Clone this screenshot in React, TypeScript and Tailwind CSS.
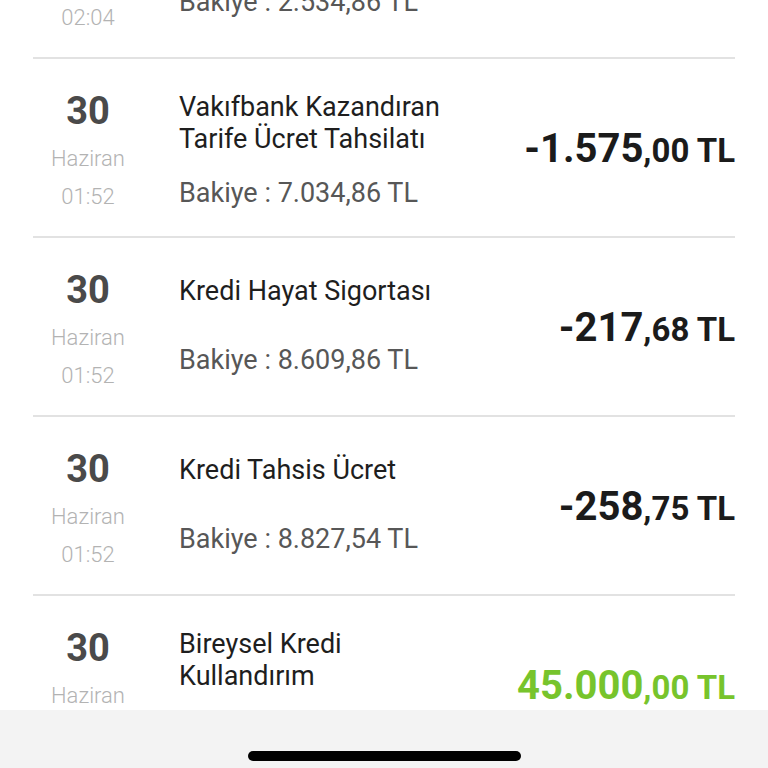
import React from "react";

type Tx = {
    day: string;
    month: string;
    time: string;
    title: string[];
    balance?: string;
    main?: string;
    cents?: string;
    positive?: boolean;
};

const rows: Tx[] = [
    { day: "30", month: "Haziran", time: "02:04", title: ["Kredi Faiz Tahsilatı"], balance: "2.534,86 TL", main: "-500", cents: ",00 TL" },
    {
        day: "30",
        month: "Haziran",
        time: "01:52",
        title: ["Vakıfbank Kazandıran", "Tarife Ücret Tahsilatı"],
        balance: "7.034,86 TL",
        main: "-1.575",
        cents: ",00 TL",
    },
    { day: "30", month: "Haziran", time: "01:52", title: ["Kredi Hayat Sigortası"], balance: "8.609,86 TL", main: "-217", cents: ",68 TL" },
    { day: "30", month: "Haziran", time: "01:52", title: ["Kredi Tahsis Ücret"], balance: "8.827,54 TL", main: "-258", cents: ",75 TL" },
    {
        day: "30",
        month: "Haziran",
        time: "01:52",
        title: ["Bireysel Kredi", "Kullandırım"],
        balance: "52.827,54 TL",
        main: "45.000",
        cents: ",00 TL",
        positive: true,
    },
];

function Row({ tx }: { tx: Tx }) {
    const twoLine = tx.title.length > 1;
    return (
        <div className="h-[179px] shrink-0 flex items-center border-b-2 border-[#e2e2e2]">
            <div className="self-start pt-[32px] w-[110px] flex flex-col items-center">
                <div className="text-[38px] leading-[40px] font-bold text-[#4a4a4a]">{tx.day}</div>
                <div className="mt-[13px] text-[22px] leading-[30px] font-light text-[#b3b3b3]">{tx.month}</div>
                <div className="mt-[8px] text-[22px] leading-[30px] font-light text-[#b3b3b3]">{tx.time}</div>
            </div>
            <div className={"self-start ml-[36px] flex-1 flex flex-col " + (twoLine ? "pt-[32px]" : "pt-[37px]")}>
                <div className="text-[27px] leading-[32px] text-[#1e1e1e]">
                    {tx.title.map((t) => (
                        <div key={t}>{t}</div>
                    ))}
                </div>
                <div className={"text-[27px] leading-[32px] text-[#575757] " + (twoLine ? "mt-[22px]" : "mt-[37px]")}>
                    Bakiye : {tx.balance}
                </div>
            </div>
            <div
                className={
                    "mt-[4px] font-bold whitespace-nowrap " + (tx.positive ? "text-[#77c42c]" : "text-[#1b1b1b]")
                }
            >
                <span className="text-[40px] leading-[44px]">{tx.main}</span>
                <span className="text-[33px] leading-[44px]">{tx.cents}</span>
            </div>
        </div>
    );
}

export default function App() {
    return (
        <div
            className="relative w-[768px] h-[768px] overflow-hidden bg-white"
            style={{ fontFamily: "Roboto, 'Noto Sans', sans-serif" }}
        >
            <div className="mx-[33px] flex flex-col mt-[-120px]">
                {rows.map((r, i) => (
                    <Row key={i} tx={r} />
                ))}
            </div>
            <div className="absolute left-0 right-0 bottom-0 h-[58px] bg-[#f3f3f3] flex items-end justify-center pb-[7px]">
                <div className="w-[273px] h-[10px] rounded-full bg-black" />
            </div>
        </div>
    );
}
